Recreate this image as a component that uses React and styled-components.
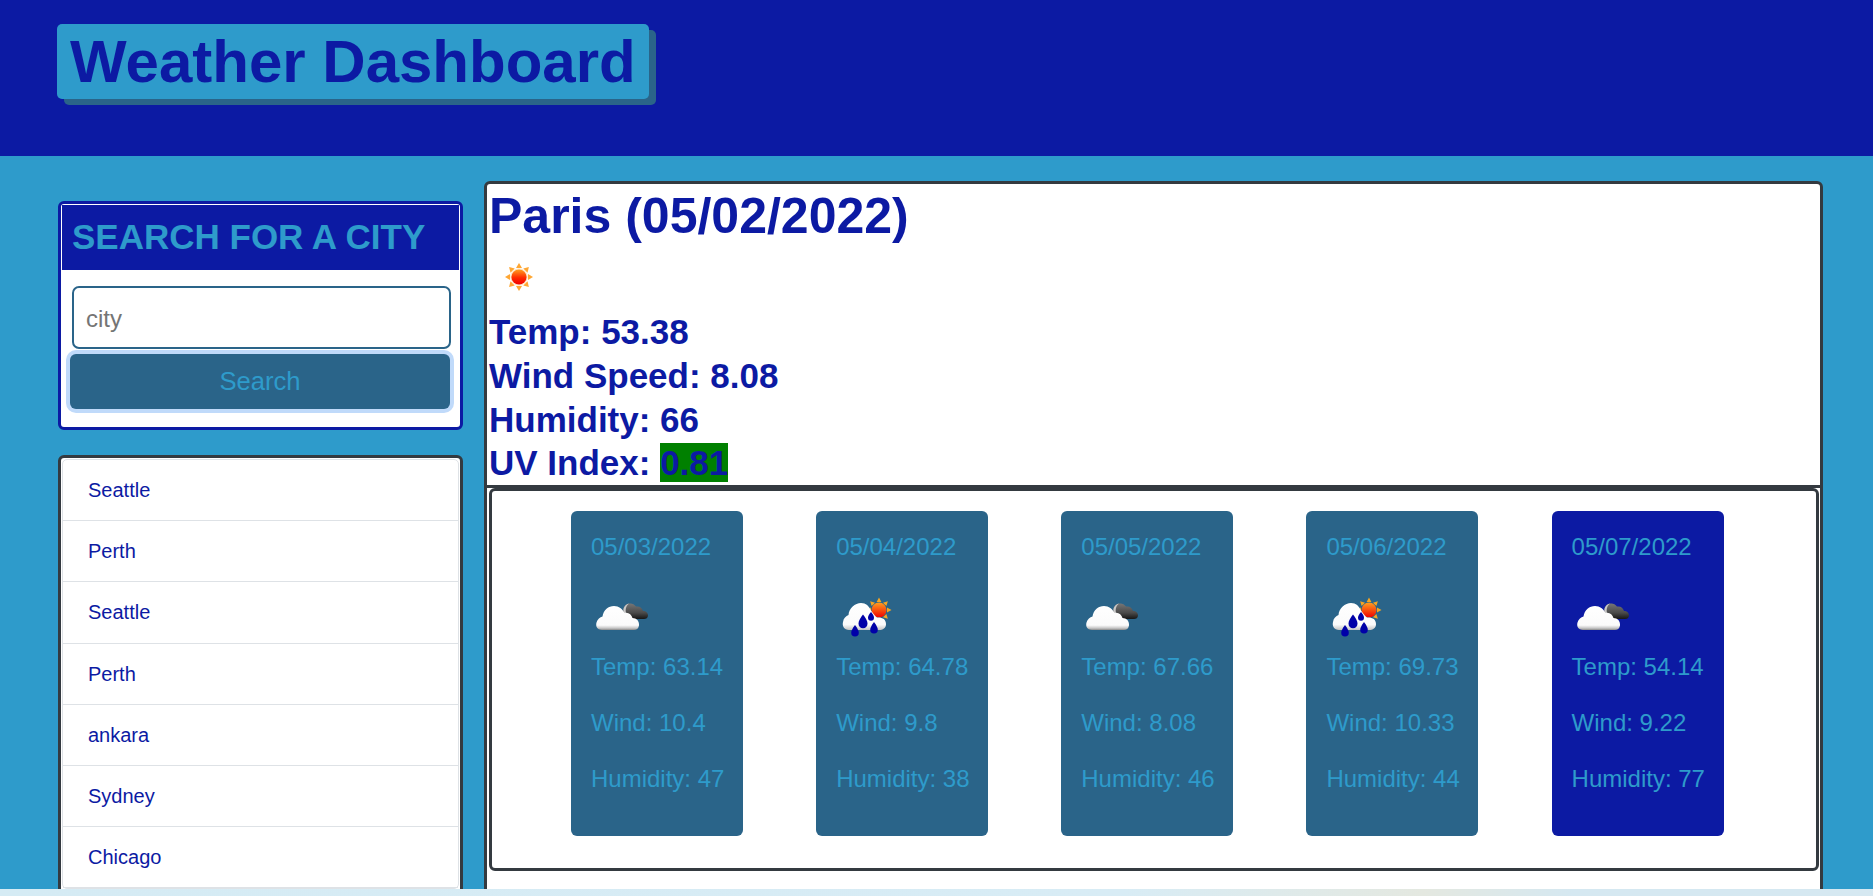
import React from "react";
import styled, { createGlobalStyle } from "styled-components";

const NAVY = "#0c1aa3";
const SKY = "#2e9bcb";
const STEEL = "#2a6489";
const SLATE = "#343a40";

const Global = createGlobalStyle`
  html, body { margin: 0; padding: 0; height: 100%; overflow: hidden; }
  body { font-family: "Liberation Sans", Arial, sans-serif; background: ${SKY}; }
  * { box-sizing: border-box; }
`;

const Page = styled.div`
  height: 896px;
  overflow: hidden;
  background: ${SKY};
`;

const Header = styled.header`
  height: 156px;
  padding: 24px 0 0 57px;
  background: ${NAVY};
`;

const Title = styled.h1`
  display: inline-block;
  margin: 0;
  padding: 1px 13px 0;
  font-size: 60px;
  line-height: 74px;
  font-weight: 700;
  color: ${NAVY};
  background: ${SKY};
  border-radius: 5px;
  box-shadow: 7px 6px 0 ${STEEL};
`;

const Main = styled.main`
  display: grid;
  grid-template-columns: 405px 1339px;
  column-gap: 21px;
  align-items: start;
  padding: 25px 0 0 58px;
`;

const Sidebar = styled.aside`
  display: flex;
  flex-direction: column;
  gap: 25px;
  padding-top: 20px;
`;

const SearchCard = styled.section`
  padding: 1px 1px 18px;
  background: #fff;
  border: 3px solid ${NAVY};
  border-radius: 6px;
`;

const SearchHeading = styled.h2`
  margin: 0;
  padding: 10px 10px 11px;
  font-size: 35px;
  line-height: 44px;
  font-weight: 700;
  color: ${SKY};
  background: ${NAVY};
`;

const SearchForm = styled.form`
  display: flex;
  flex-direction: column;
  gap: 5px;
  padding: 16px 8px 0;
`;

const CityInput = styled.input`
  display: block;
  width: 379px;
  height: 63px;
  margin-left: 2px;
  padding: 2px 12px 0;
  font: 24px "Liberation Sans", Arial, sans-serif;
  background: #fff;
  border: 2px solid ${STEEL};
  border-radius: 7px;
  outline: none;
  &::placeholder { color: #757575; opacity: 1; }
`;

const SearchButton = styled.button`
  display: block;
  width: 380px;
  height: 55px;
  padding: 0;
  font: 25.6px "Liberation Sans", Arial, sans-serif;
  color: ${SKY};
  background: ${STEEL};
  border: 0;
  border-radius: 6px;
  box-shadow: 0 0 0 4px #c0dafa;
`;

const CityCard = styled.section`
  padding: 1px 1px 60px;
  background: #fff;
  border: 3px solid ${SLATE};
  border-radius: 6px;
`;

const CityList = styled.ul`
  margin: 0;
  padding: 0;
  list-style: none;
  border: 1px solid #dee2e6;
  border-radius: 5px;
`;

const CityItem = styled.li`
  padding: 15.1px 25px;
  font-size: 20px;
  line-height: 30px;
  color: ${NAVY};
  border-bottom: 1px solid #dee2e6;
`;

const Panel = styled.section`
  padding-bottom: 60px;
  background: #fff;
  border: 3px solid ${SLATE};
  border-radius: 6px;
`;

const Today = styled.div`
  padding: 2px 0 0 2px;
  border-bottom: 3px solid ${SLATE};
`;

const CityTitle = styled.h2`
  margin: 0;
  font-size: 50px;
  line-height: 60px;
  font-weight: 700;
  color: ${NAVY};
`;

const Stat = styled.div`
  font-size: 35px;
  line-height: 43.75px;
  font-weight: 700;
  color: ${NAVY};
`;

const UvBadge = styled.span`
  background: #008000;
`;

const IconFrame = styled.svg`
  display: block;
  width: 64px;
  height: 64px;
`;

const Forecast = styled.div`
  display: flex;
  gap: 73.15px;
  margin: 0 1px 0 2px;
  padding: 20px 0 32px 79px;
  border: 3px solid ${SLATE};
  border-radius: 6px;
`;

const DayCard = styled.article`
  width: 172px;
  height: 325px;
  flex: none;
  padding: 18px 20px 0;
  font-size: 24px;
  line-height: 36px;
  color: ${SKY};
  background: ${(p) => (p.$current ? NAVY : STEEL)};
  border-radius: 6px;
  white-space: nowrap;
`;

const DayDate = styled.div`
  margin-bottom: 20px;
`;

const DayStat = styled.p`
  margin: 0 0 20px;
`;

const BottomStrip = styled.div`
  position: fixed;
  left: 0;
  right: 0;
  bottom: 0;
  height: 7px;
  background: linear-gradient(90deg, #d5ebf4 0%, #d8ecf5 60%, #e4e8e0 76%, #d5e8f1 84%, #d5e8f1 100%);
`;

const RAY_ANGLES = [0, 45, 90, 135, 180, 225, 270, 315];

const SunIcon = () => (
  <IconFrame viewBox="0 0 64 64" aria-hidden="true">
    <defs>
      <linearGradient id="sunDisc" x1="0" y1="0" x2="0" y2="1">
        <stop offset="0" stopColor="#ffa020" />
        <stop offset="0.55" stopColor="#ff2a00" />
        <stop offset="1" stopColor="#f00000" />
      </linearGradient>
    </defs>
    <g fill="#ffa733">
      {RAY_ANGLES.map((a) => (
        <polygon key={a} points="27,22 33,22 30,17" transform={`rotate(${a} 30 31)`} />
      ))}
    </g>
    <circle cx="30" cy="31" r="8.8" fill="#ffe7c8" />
    <circle cx="30" cy="31" r="7.6" fill="url(#sunDisc)" />
  </IconFrame>
);

const WHITE_CLOUD = "M11 44C6 44 4.500 40 5.500 36.500C6.500 33 9 31 11.500 30.500C12.500 24 17.500 20 23 20C28 20 31.500 23 33.500 27C37.500 26 40.500 28.500 41.500 32C45.500 32 48.500 35 48 39.500C47.500 42.500 45.500 44 43 44Z";

const CloudIcon = () => (
  <IconFrame viewBox="0 0 64 64" aria-hidden="true">
    <defs>
      <linearGradient id="cloudWhite" x1="0" y1="0" x2="0" y2="1">
        <stop offset="0" stopColor="#ffffff" />
        <stop offset="0.8" stopColor="#fbfbfb" />
        <stop offset="0.92" stopColor="#c8c8c8" />
        <stop offset="1" stopColor="#8a8a8a" />
      </linearGradient>
      <linearGradient id="cloudDark" x1="0" y1="0" x2="0" y2="1">
        <stop offset="0" stopColor="#777777" />
        <stop offset="0.6" stopColor="#4a4a4a" />
        <stop offset="1" stopColor="#161616" />
      </linearGradient>
    </defs>
    <g transform="translate(0 1)">
      <path d="M33 28C31 24 33 18 38 17.500C41 17 43 18 45 20.500C49 20 51 22 52 25C55 25 57 27 57 29.500C57 32 55 33 53 33L40 33Z" fill="url(#cloudDark)" />
      <path d="M33 27C31 23 34 18 38 17.500C36 19 34 22 35 27Z" fill="#c9c9c9" />
      <path d={WHITE_CLOUD} fill="url(#cloudWhite)" />
    </g>
  </IconFrame>
);

const RainIcon = () => (
  <IconFrame viewBox="0 0 64 64" aria-hidden="true">
    <defs>
      <linearGradient id="rainSun" x1="0" y1="0" x2="0" y2="1">
        <stop offset="0" stopColor="#ffa020" />
        <stop offset="1" stopColor="#f00000" />
      </linearGradient>
      <linearGradient id="rainCloud" x1="0" y1="0" x2="0" y2="1">
        <stop offset="0" stopColor="#ffffff" />
        <stop offset="0.8" stopColor="#fbfbfb" />
        <stop offset="1" stopColor="#c4c4c4" />
      </linearGradient>
    </defs>
    <g transform="translate(0 1)">
      <g fill="#f5a623">
        {RAY_ANGLES.map((a) => (
          <polygon key={a} points="40.600,16 45.400,16 43,11.500" transform={`rotate(${a} 43 24)`} />
        ))}
      </g>
      <circle cx="43" cy="24" r="7.500" fill="url(#rainSun)" />
      <path d="M13 44C8 44 6 40 7 36C7.500 32 10 30 12.500 29C13 22 19 17 25 17C30 17 33 20 35 24.500C37 27 39 30 41 31.500C46 31 50 33 50 38C50 42 47 44 43 44Z" fill="url(#rainCloud)" />
      <g fill="#0000a8">
        <path d="M19 39C21.800 43 22.800 44.800 22.800 46.800A3.800 3.800 0 0 1 15.200 46.800C15.200 44.800 16.200 43 19 39Z" />
        <path d="M27 28.500C30.400 33 31.500 35.500 31.500 37.800A4.500 4.500 0 0 1 22.500 37.800C22.500 35.500 23.600 33 27 28.500Z" />
        <path d="M35 26C37.200 28.800 38 30.200 38 31.800A3 3 0 0 1 32 31.800C32 30.200 32.800 28.800 35 26Z" />
        <path d="M38 36C40.800 40 41.800 41.800 41.800 43.800A3.800 3.800 0 0 1 34.200 43.800C34.200 41.800 35.200 40 38 36Z" />
      </g>
    </g>
  </IconFrame>
);

const CITIES = ["Seattle", "Perth", "Seattle", "Perth", "ankara", "Sydney", "Chicago"];

const DAYS = [
  { date: "05/03/2022", Icon: CloudIcon, temp: "63.14", wind: "10.4", humidity: "47" },
  { date: "05/04/2022", Icon: RainIcon, temp: "64.78", wind: "9.8", humidity: "38" },
  { date: "05/05/2022", Icon: CloudIcon, temp: "67.66", wind: "8.08", humidity: "46" },
  { date: "05/06/2022", Icon: RainIcon, temp: "69.73", wind: "10.33", humidity: "44" },
  { date: "05/07/2022", Icon: CloudIcon, temp: "54.14", wind: "9.22", humidity: "77", current: true },
];

export default function App() {
  return (
    <Page>
      <Global />
      <Header>
        <Title>Weather Dashboard</Title>
      </Header>
      <Main>
        <Sidebar>
          <SearchCard>
            <SearchHeading>SEARCH FOR A CITY</SearchHeading>
            <SearchForm onSubmit={(e) => e.preventDefault()}>
              <CityInput placeholder="city" />
              <SearchButton type="submit">Search</SearchButton>
            </SearchForm>
          </SearchCard>
          <CityCard>
            <CityList>
              {CITIES.map((city, i) => (
                <CityItem key={i}>{city}</CityItem>
              ))}
            </CityList>
          </CityCard>
        </Sidebar>
        <Panel>
          <Today>
            <CityTitle>Paris (05/02/2022)</CityTitle>
            <SunIcon />
            <Stat>Temp: 53.38</Stat>
            <Stat>Wind Speed: 8.08</Stat>
            <Stat>Humidity: 66</Stat>
            <Stat>UV Index: <UvBadge>0.81</UvBadge></Stat>
          </Today>
          <Forecast>
            {DAYS.map(({ date, Icon, temp, wind, humidity, current }) => (
              <DayCard key={date} $current={current}>
                <DayDate>{date}</DayDate>
                <Icon />
                <DayStat>Temp: {temp}</DayStat>
                <DayStat>Wind: {wind}</DayStat>
                <DayStat>Humidity: {humidity}</DayStat>
              </DayCard>
            ))}
          </Forecast>
        </Panel>
      </Main>
      <BottomStrip />
    </Page>
  );
}
